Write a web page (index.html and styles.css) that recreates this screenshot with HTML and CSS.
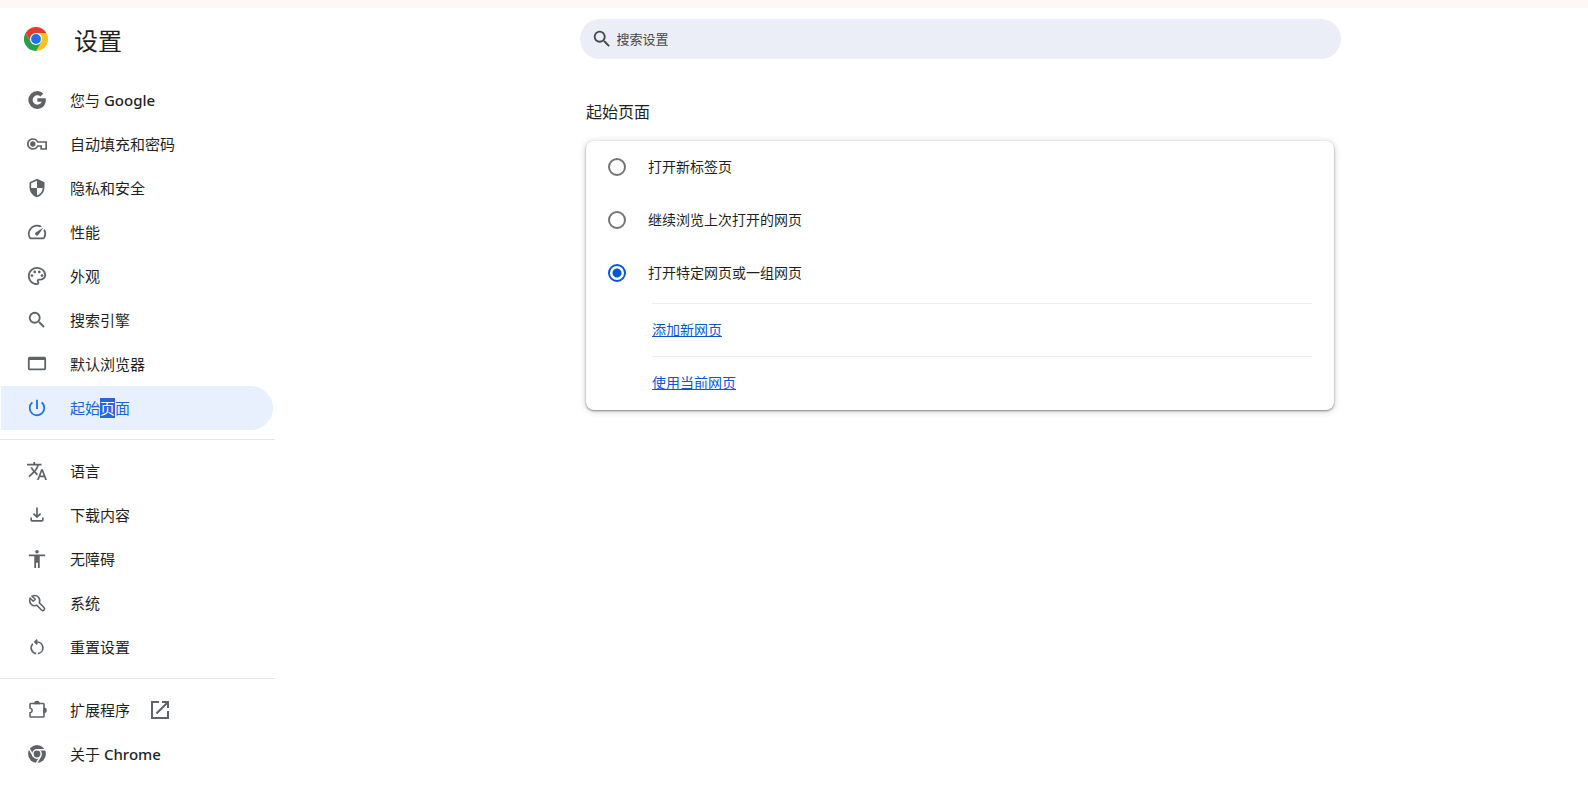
FILE: index.html
```html
<!DOCTYPE html>
<html lang="zh-CN">
<head>
<meta charset="utf-8">
<title>设置 - 起始页面</title>
<link rel="stylesheet" href="styles.css">
</head>
<body>
<div class="top-strip"></div>
<header class="toolbar">
  <div class="brand">
    <svg class="logo" viewBox="0 0 48 48" aria-hidden="true">
      <path fill="#e33b2e" d="M24 24 3.2 12A24 24 0 0 1 44.8 12Z"/>
      <path fill="#fcc31e" d="M24 24V12H44.8A24 24 0 0 1 24 48Z"/>
      <path fill="#2b9e4b" d="M24 24 34.4 30 24 48A24 24 0 0 1 3.2 12L13.6 30Z"/>
      <path fill="#e33b2e" d="M3.2 12 13.6 30 24 24V12Z"/>
      <circle cx="24" cy="24" r="12" fill="#fff"/>
      <circle cx="24" cy="24" r="9.8" fill="#1a73e8"/>
    </svg>
    <h1 class="brand-title">设置</h1>
  </div>
  <label class="search">
    <svg class="search-icon" viewBox="0 0 24 24" aria-hidden="true"><path d="M15.500 14h-.79l-.28-.27A6.470 6.470 0 0 0 16 9.500 6.500 6.500 0 1 0 9.500 16c1.610 0 3.090-.59 4.230-1.570l.27.28v.79l5 4.990L20.490 19zm-6 0C7.010 14 5 11.990 5 9.500S7.010 5 9.500 5 14 7.010 14 9.500 11.990 14 9.500 14"/></svg>
    <input class="search-input" type="search" placeholder="搜索设置" aria-label="搜索设置">
  </label>
</header>
<div class="layout">
  <nav class="sidebar">
    <a class="nav-item" href="#people"><svg class="icon" viewBox="0 0 24 24"><path d="M12.400 10v4.200h5.100c-.7 2-2.500 3.400-5.100 3.400a5.600 5.600 0 1 1 0-11.200c1.450 0 2.700.5 3.700 1.360l3.300-3.300C17.600 2.500 15.100 1.300 12.300 1.300a10.700 10.700 0 1 0 0 21.400c9 0 11-8.400 10.100-12.700z"/></svg>您与&nbsp;<span class="latin">Google</span></a>
    <a class="nav-item" href="#autofill"><svg class="icon" viewBox="0 0 24 24"><path d="M22.500 19h-6.500v-3.600h-2.500C12.200 17.600 9.800 19 7 19c-3.860 0-7-3.140-7-7s3.140-7 7-7c2.720 0 5.100 1.400 6.400 3.600H24V19zM18 17h4v-6.400H12.200C11.400 8.400 9.400 7 7 7c-2.760 0-5 2.240-5 5s2.240 5 5 5c2.400 0 4.400-1.400 5.200-3.600H18zM7 15.200a3.200 3.200 0 1 1 0-6.400 3.200 3.200 0 0 1 0 6.400"/></svg>自动填充和密码</a>
    <a class="nav-item" href="#privacy"><svg class="icon" viewBox="0 0 24 24"><path d="M12 1 3 5v6c0 5.550 3.840 10.740 9 12 5.160-1.260 9-6.450 9-12V5zm0 10.990h7c-.53 4.120-3.280 7.790-7 8.940V12H5V6.300l7-3.110z"/></svg>隐私和安全</a>
    <a class="nav-item" href="#performance"><svg class="icon" viewBox="1 1 22 22"><path d="m20.380 8.570-1.230 1.850a8 8 0 0 1-.22 7.580H5.070A8 8 0 0 1 15.580 6.850l1.850-1.230A10 10 0 0 0 3.350 19a2 2 0 0 0 1.720 1h13.850a2 2 0 0 0 1.740-1 10 10 0 0 0-.27-10.440zm-9.790 6.840a2 2 0 0 0 2.830 0l5.660-8.490-8.490 5.660a2 2 0 0 0 0 2.830"/></svg>性能</a>
    <a class="nav-item" href="#appearance"><svg class="icon" viewBox="1 1 22 22"><path d="M12 22C6.490 22 2 17.510 2 12S6.490 2 12 2s10 4.040 10 9c0 3.310-2.690 6-6 6h-1.770c-.28 0-.5.22-.5.5 0 .12.05.23.13.33.41.47.64 1.060.64 1.670A2.500 2.500 0 0 1 12 22m0-18c-4.410 0-8 3.590-8 8s3.590 8 8 8c.28 0 .5-.22.5-.5a.54.54 0 0 0-.14-.35c-.41-.46-.63-1.050-.63-1.650a2.500 2.500 0 0 1 2.500-2.500H16c2.210 0 4-1.790 4-4 0-3.860-3.590-7-8-7"/><circle cx="6.500" cy="11.500" r="1.500"/><circle cx="9.500" cy="7.500" r="1.500"/><circle cx="14.500" cy="7.500" r="1.500"/><circle cx="17.500" cy="11.500" r="1.500"/></svg>外观</a>
    <a class="nav-item" href="#search"><svg class="icon" viewBox="1 1 22 22"><path d="M15.500 14h-.79l-.28-.27A6.470 6.470 0 0 0 16 9.500 6.500 6.500 0 1 0 9.500 16c1.610 0 3.090-.59 4.230-1.570l.27.28v.79l5 4.990L20.490 19zm-6 0C7.010 14 5 11.990 5 9.500S7.010 5 9.500 5 14 7.010 14 9.500 11.990 14 9.500 14"/></svg>搜索引擎</a>
    <a class="nav-item" href="#default-browser"><svg class="icon" viewBox="1 1 22 22"><path d="M20 4H4a2 2 0 0 0-2 2v11c0 1.100.9 2 2 2h16a2 2 0 0 0 2-2V6a2 2 0 0 0-2-2m0 13H4V7.500h16z"/></svg>默认浏览器</a>
    <a class="nav-item selected" href="#on-startup" aria-current="page"><svg class="icon" viewBox="1 1 22 22"><path d="M13 3h-2v10h2zm4.830 2.170-1.420 1.420A6.920 6.920 0 0 1 19 12c0 3.870-3.130 7-7 7A6.995 6.995 0 0 1 7.580 6.580L6.170 5.170A8.932 8.932 0 0 0 3 12a9 9 0 0 0 18 0c0-2.740-1.230-5.180-3.170-6.830"/></svg><span>起始<mark class="picked">页</mark>面</span></a>
    <hr class="divider">
    <a class="nav-item" href="#languages"><svg class="icon" viewBox="1 1 22 22"><path d="m12.870 15.070-2.540-2.510.03-.03A17.520 17.520 0 0 0 14.070 6H17V4h-7V2H8v2H1v1.990h11.170C11.500 7.920 10.440 9.750 9 11.350 8.070 10.320 7.300 9.190 6.690 8h-2c.73 1.630 1.730 3.170 2.980 4.560l-5.090 5.020L4 19l5-5 3.110 3.110zM18.500 10h-2L12 22h2l1.120-3h4.750L21 22h2zm-2.620 7 1.620-4.330L19.120 17z"/></svg>语言</a>
    <a class="nav-item" href="#downloads"><svg class="icon" viewBox="0 0 24 24"><path d="m12 16-5-5 1.400-1.450 2.600 2.600V3h2v9.150l2.600-2.600L17 11zm-6 4a2 2 0 0 1-2-2v-3h2v3h12v-3h2v3a2 2 0 0 1-2 2z"/></svg>下载内容</a>
    <a class="nav-item" href="#accessibility"><svg class="icon" viewBox="1 1 22 22"><path d="M12 2a2 2 0 1 1 0 4 2 2 0 0 1 0-4m9 7h-6v13h-2v-6h-2v6H9V9H3V7h18z"/></svg>无障碍</a>
    <a class="nav-item" href="#system"><svg class="icon outline" viewBox="0 0 20 20"><path d="M3.200 5.200 6.200 8.200 8.200 6.200 5.200 3.200C7.500 2.200 10 2.500 11.500 4.200 13 6 13 8 12.300 9.800L17 14.500A1.700 1.700 0 0 1 14.500 17L9.800 12.300C8 13 6 12.800 4.300 11.300 2.500 9.500 2.300 7.500 3.200 5.200Z"/></svg>系统</a>
    <a class="nav-item" href="#reset"><svg class="icon" viewBox="0 0 24 24"><path d="M11 20.950A8 8 0 0 1 6.350 7.350l1.420 1.400A6 6 0 0 0 11 18.920zm2 0v-2.030A6 6 0 0 0 12 7h-.1l1.100 1.100-1.400 1.400L8.100 6l3.500-3.500L13 3.900 11.900 5h.1a8 8 0 0 1 1 15.950"/></svg>重置设置</a>
    <hr class="divider">
    <a class="nav-item" href="#extensions"><svg class="icon outline" viewBox="0 0 20 20"><path d="M3 8V4.300Q3 3.500 3.800 3.500H16.200Q17 3.500 17 4.300V16.200Q17 17 16.200 17H3.800Q3 17 3 16.200V12.800Q5.200 12.200 5.200 10.400T3 8Z"/><path d="M8 3.500a2 2 0 0 1 4 0ZM17 8.200a2 2 0 0 1 0 4Z" class="solid"/></svg>扩展程序<svg class="icon launch" viewBox="2 2 20 20"><path d="M19 19H5V5h6V3H3v18h18v-8h-2zM14 3v2h3.590l-9.830 9.830 1.410 1.410L19 6.410V10h2V3z"/></svg></a>
    <a class="nav-item" href="#about"><svg class="icon" viewBox="0 0 24 24"><circle cx="12" cy="12" r="10.700"/><g fill="none" stroke="#fff" stroke-width="1.800"><circle cx="12" cy="12" r="5"/><path d="M12 7h11M7.670 14.500 2.200 5M16.330 14.500 10.800 24"/></g></svg>关于&nbsp;<span class="latin">Chrome</span></a>
  </nav>
  <main class="content">
    <h2 class="section-title">起始页面</h2>
    <section class="card">
      <div class="options">
        <label class="option"><input class="radio" type="radio" name="startup">打开新标签页</label>
        <label class="option"><input class="radio" type="radio" name="startup">继续浏览上次打开的网页</label>
        <label class="option"><input class="radio" type="radio" name="startup" checked>打开特定网页或一组网页</label>
      </div>
      <div class="link-row"><a class="link" href="#add">添加新网页</a></div>
      <div class="link-row"><a class="link" href="#current">使用当前网页</a></div>
    </section>
  </main>
</div>
</body>
</html>
```
FILE: styles.css
```css
* { box-sizing: border-box; }

body {
  margin: 0;
  background: #fff;
  color: #1f1f1f;
  font-family: "Noto Sans", "Noto Sans CJK SC", sans-serif;
  font-size: 14px;
  line-height: 20px;
}

.top-strip { height: 8px; background: #fff7f5; }

.toolbar,
.layout {
  display: grid;
  grid-template-columns: 332px minmax(0, 1fr);
}

.toolbar { height: 70px; align-items: start; }

.brand {
  display: flex;
  align-items: center;
  gap: 26px;
  height: 62px;
  padding-left: 24px;
}

.logo { width: 24px; height: 24px; }

.brand-title { margin: 0; padding-top: 4px; font-size: 24px; font-weight: 400; line-height: 32px; }

.search {
  display: flex;
  align-items: center;
  gap: 4px;
  width: 100%;
  max-width: 761px;
  height: 40px;
  margin: 11px auto 0;
  padding: 0 11px;
  border-radius: 20px;
  background: #ebeef7;
}

.search-icon { width: 22px; height: 22px; fill: #474747; }

.search-input {
  flex: 1;
  min-width: 0;
  padding: 0;
  border: 0;
  outline: 0;
  background: none;
  font: inherit;
  font-size: 13px;
}

.search-input::placeholder { color: #474747; opacity: 1; }

.nav-item {
  display: flex;
  align-items: center;
  width: 272px;
  height: 44px;
  margin-left: 1px;
  padding-left: 26px;
  border-radius: 0 22px 22px 0;
  color: #1f1f1f;
  font-size: 15px;
  text-decoration: none;
}

.latin { font-weight: 500; }

.icon { width: 20px; height: 20px; margin-right: 23px; fill: #5f6368; }

.outline { fill: none; stroke: #5f6368; stroke-width: 1.6; }

.solid { fill: #5f6368; }

.launch { margin: 0 0 0 20px; }

.selected { background: #e8f0fe; color: #1967d2; }

.selected .icon { fill: #1a73e8; }

.picked { background: #2b65d3; color: #fff; }

.divider {
  width: 275px;
  height: 1px;
  margin: 9px 0;
  border: 0;
  background: #e6e6e6;
}

.content { width: 100%; max-width: 748px; margin: 0 auto; }

.section-title { margin: 0; padding: 22px 0 17px; font-size: 16px; font-weight: 400; line-height: 24px; }

.card {
  padding-bottom: 1px;
  border-radius: 8px;
  background: #fff;
  box-shadow: 0 1px 2px rgba(0, 0, 0, 0.4), 0 1px 6px 1px rgba(0, 0, 0, 0.16);
}

.options { padding-bottom: 4px; }

.option {
  display: flex;
  align-items: center;
  gap: 22px;
  height: 53px;
  padding-left: 22px;
}

.option:first-child { height: 52px; }

.radio {
  appearance: none;
  width: 18px;
  height: 18px;
  margin: 0;
  border: 2px solid #757575;
  border-radius: 50%;
}

.radio:checked {
  border-color: #0b57d0;
  background: radial-gradient(circle, #0b57d0 0 4px, transparent 5px);
}

.link-row {
  display: flex;
  align-items: center;
  height: 53px;
  margin: 0 22px 0 66px;
  border-top: 1px solid #ececec;
}

.link { color: #0b57d0; }
```
